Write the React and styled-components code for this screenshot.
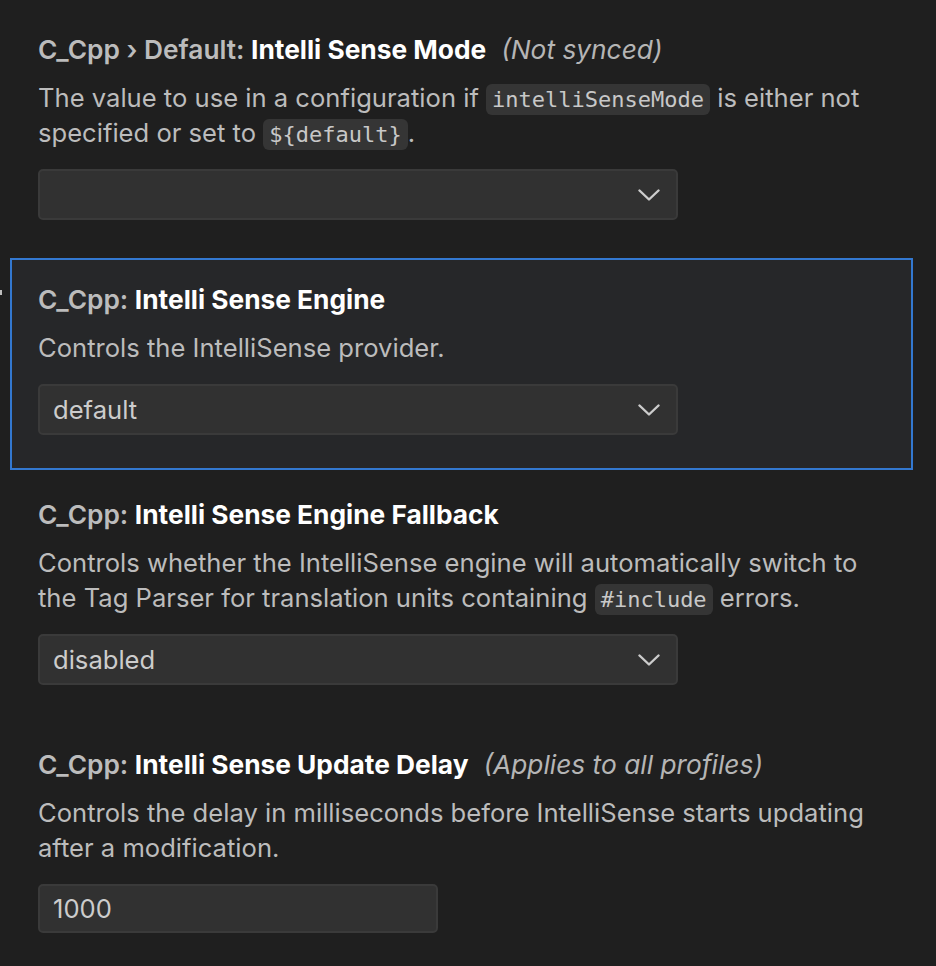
import styled, { createGlobalStyle } from "styled-components"

const GlobalStyle = createGlobalStyle`
    html, body {
        margin: 0;
        padding: 0;
        background: #1f1f1f;
    }
    body {
        font-family: Inter, "Noto Sans", "Liberation Sans", sans-serif;
        -webkit-font-smoothing: antialiased;
    }
`

const Page = styled.div`
    display: flex;
    flex-direction: column;
    gap: 3px;
    padding: 8px 23px 0 10px;
    min-height: 966px;
    box-sizing: border-box;
    background: #1f1f1f;
`

const Item = styled.div`
    position: relative;
    padding: 22px 26px 33px;
    border: 2px solid ${p => (p.$focused ? "#3378d0" : "transparent")};
    background: ${p => (p.$focused ? "#262729" : "transparent")};

    ${p => p.$focused && `
        &::before {
            content: "";
            position: absolute;
            left: -12px;
            top: 30px;
            width: 2px;
            height: 5px;
            background: #bdbdbd;
        }
    `}
`

const Title = styled.div`
    font-size: 26.3px;
    line-height: 36px;
    font-weight: 700;
    color: #ffffff;
    white-space: nowrap;
`

const Category = styled.span`
    color: #bcbcbc;
    font-weight: 600;
`

const Scope = styled.span`
    margin-left: 15px;
    font-style: italic;
    font-weight: 400;
    color: #b5b5b5;
`

const Desc = styled.div`
    margin-top: 12px;
    font-size: 25.6px;
    line-height: 35px;
    color: #bcbcbc;
`

const Code = styled.code`
    display: inline-block;
    font-family: "DejaVu Sans Mono", "Liberation Mono", monospace;
    font-size: 22px;
    line-height: 31px;
    color: #c8c8c8;
    background: #353535;
    border-radius: 6px;
    padding: 0 6px;
`

const SelectBox = styled.div`
    display: flex;
    align-items: center;
    justify-content: space-between;
    box-sizing: border-box;
    margin-top: 19px;
    width: ${p => p.$width || 640}px;
    height: ${p => p.$height || 51}px;
    padding: 0 16px 0 13px;
    background: #313131;
    border: 2px solid #3a3a3a;
    border-radius: 5px;
    font-size: 25.6px;
    color: #cccccc;
`

const Chevron = () => (
    <svg width="22" height="12" viewBox="0 0 22 12" fill="none">
        <path d="M1.5 1.5 L11 10.5 L20.5 1.5" stroke="#cccccc" strokeWidth="2.4" strokeLinecap="round" strokeLinejoin="round" />
    </svg>
)

const App = () => {
    return (
        <>
            <GlobalStyle />
            <Page>
                <Item>
                    <Title>
                        <Category>C_Cpp › Default: </Category>Intelli Sense Mode
                        <Scope>(Not synced)</Scope>
                    </Title>
                    <Desc>
                        The value to use in a configuration if <Code>intelliSenseMode</Code> is either not specified or set to <Code>{"${default}"}</Code>.
                    </Desc>
                    <SelectBox>
                        <span />
                        <Chevron />
                    </SelectBox>
                </Item>

                <Item $focused>
                    <Title>
                        <Category>C_Cpp: </Category>Intelli Sense Engine
                    </Title>
                    <Desc>Controls the IntelliSense provider.</Desc>
                    <SelectBox>
                        <span>default</span>
                        <Chevron />
                    </SelectBox>
                </Item>

                <Item>
                    <Title>
                        <Category>C_Cpp: </Category>Intelli Sense Engine Fallback
                    </Title>
                    <Desc>
                        Controls whether the IntelliSense engine will automatically switch to the Tag Parser for translation units containing <Code>#include</Code> errors.
                    </Desc>
                    <SelectBox>
                        <span>disabled</span>
                        <Chevron />
                    </SelectBox>
                </Item>

                <Item>
                    <Title>
                        <Category>C_Cpp: </Category>Intelli Sense Update Delay
                        <Scope>(Applies to all profiles)</Scope>
                    </Title>
                    <Desc>
                        Controls the delay in milliseconds before IntelliSense starts updating after a modification.
                    </Desc>
                    <SelectBox $width={400} $height={49}>
                        <span>1000</span>
                    </SelectBox>
                </Item>
            </Page>
        </>
    )
}

export default App
